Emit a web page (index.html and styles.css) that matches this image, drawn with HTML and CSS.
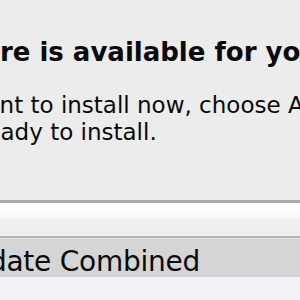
FILE: index.html
```html
<!DOCTYPE html>
<html>
<head>
<meta charset="utf-8">
<link rel="stylesheet" href="styles.css">
</head>
<body>
<div class="window">
  <div class="message">
    <h1 class="title">Software is available for your computer.</h1>
    <p class="info">If you don't want to install now, choose Apple menu &gt; Software Update<br>when you're ready to install.</p>
  </div>
  <div class="panel">
    <div class="toolbar"></div>
    <div class="header"><span class="col">Mac OS X Update Combined</span></div>
    <div class="list"></div>
  </div>
</div>
</body>
</html>
```
FILE: styles.css
```css
html, body {
  margin: 0;
  padding: 0;
}
body {
  width: 300px;
  height: 300px;
  overflow: hidden;
  background: #ececec;
  font-family: "DejaVu Sans", "Lucida Grande", Verdana, sans-serif;
  color: #0a0a0a;
}
.window {
  display: flex;
  flex-direction: column;
  width: 300px;
  height: 300px;
}
.message {
  height: 200px;
  white-space: nowrap;
  padding-top: 35px;
  box-sizing: border-box;
}
.title {
  margin: 0 0 0 -102px;
  font-size: 26px;
  font-weight: bold;
  line-height: 34px;
}
.info {
  margin: 23px 0 0 -171px;
  font-size: 23px;
  font-weight: normal;
  line-height: 27px;
}
.panel {
  flex: 1;
  display: flex;
  flex-direction: column;
}
.toolbar {
  height: 33px;
  border-top: 3px solid #aaaaaa;
  border-bottom: 2px solid #b5b5b5;
  background: linear-gradient(#ffffff 0, #fbfbfb 12px, #efefef 18px, #efefef 100%);
}
.header {
  height: 39px;
  border-top: 1px solid #e2e2e2;
  background: #d5d5d5;
  white-space: nowrap;
  font-size: 28px;
  letter-spacing: -0.25px;
  line-height: 38px;
  box-sizing: border-box;
  overflow: hidden;
}
.col {
  display: block;
  margin-left: -189px;
  padding-top: 4px;
}
.list {
  flex: 1;
  background: #f3f3f7;
}
```
